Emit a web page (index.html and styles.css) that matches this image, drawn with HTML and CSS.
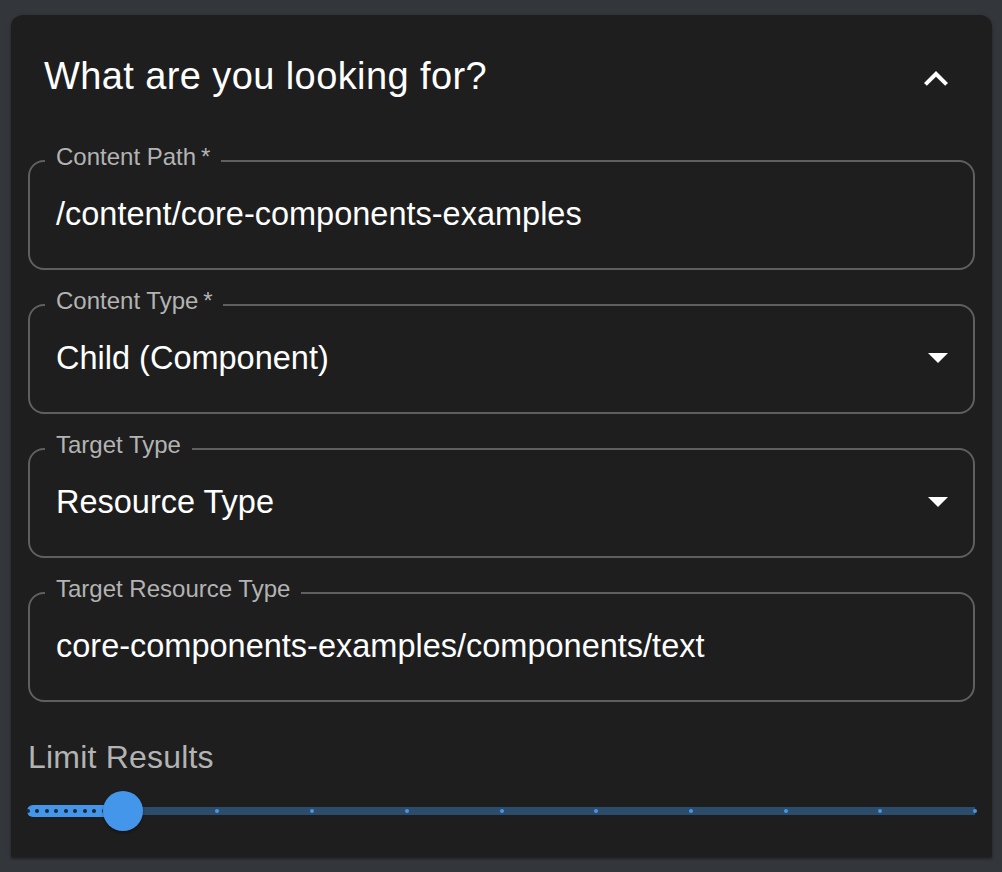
FILE: index.html
```html
<!DOCTYPE html>
<html lang="en">
<head>
<meta charset="utf-8">
<title>Search</title>
<link rel="stylesheet" href="styles.css">
</head>
<body>
<section class="card">
  <header class="card-header">
    <h2 class="title">What are you looking for?</h2>
    <button class="expand" aria-label="collapse">
      <svg viewBox="0 0 24 24" width="48" height="48"><path fill="#fff" d="M12 8l-6 6 1.41 1.41L12 10.83l4.59 4.58L18 14z"/></svg>
    </button>
  </header>
  <div class="details">
    <div class="fields">
      <div class="field">
        <span class="label">Content Path&thinsp;*</span>
        <span class="value">/content/core-components-examples</span>
      </div>
      <div class="field select">
        <span class="label">Content Type&thinsp;*</span>
        <span class="value">Child (Component)</span>
        <svg class="arrow" viewBox="7 10 10 5" width="20" height="10"><path fill="#fff" d="M7 10l5 5 5-5z"/></svg>
      </div>
      <div class="field select">
        <span class="label">Target Type</span>
        <span class="value">Resource Type</span>
        <svg class="arrow" viewBox="7 10 10 5" width="20" height="10"><path fill="#fff" d="M7 10l5 5 5-5z"/></svg>
      </div>
      <div class="field">
        <span class="label">Target Resource Type</span>
        <span class="value">core-components-examples/components/text</span>
      </div>
    </div>
    <div class="limit-label">Limit Results</div>
    <div class="slider">
      <span class="rail"></span>
      <span class="track" style="width:10%"></span>
      <span class="mark active" style="left:0%"></span>
      <span class="mark active" style="left:1%"></span>
      <span class="mark active" style="left:2%"></span>
      <span class="mark active" style="left:3%"></span>
      <span class="mark active" style="left:4%"></span>
      <span class="mark active" style="left:5%"></span>
      <span class="mark active" style="left:6%"></span>
      <span class="mark active" style="left:7%"></span>
      <span class="mark active" style="left:8%"></span>
      <span class="mark active" style="left:9%"></span>
      <span class="mark active" style="left:10%"></span>
      <span class="mark" style="left:20%"></span>
      <span class="mark" style="left:30%"></span>
      <span class="mark" style="left:40%"></span>
      <span class="mark" style="left:50%"></span>
      <span class="mark" style="left:60%"></span>
      <span class="mark" style="left:70%"></span>
      <span class="mark" style="left:80%"></span>
      <span class="mark" style="left:90%"></span>
      <span class="mark" style="left:100%"></span>
      <span class="thumb" style="left:10%"></span>
    </div>
  </div>
</section>
</body>
</html>
```
FILE: styles.css
```css
html, body {
  margin: 0;
  padding: 0;
  background: #33363b;
}
body {
  padding: 15px 10px 15px 11px;
  font-family: "Liberation Sans", Arial, Helvetica, sans-serif;
  color: #fff;
}
.card {
  width: 981px;
  height: 842px;
  box-sizing: border-box;
  background: #1e1e1e;
  border-radius: 12px 12px 0 0;
  box-shadow: 0 2px 2px rgba(0,0,0,0.25), 0 1px 4px rgba(0,0,0,0.2);
}
.card-header {
  height: 128px;
  display: flex;
  align-items: center;
  justify-content: space-between;
  padding: 0 32px 0 33px;
}
.title {
  margin: 0 0 7px 0;
  font-size: 38px;
  line-height: 38px;
  letter-spacing: 0.4px;
  font-weight: 400;
}
.expand {
  width: 48px;
  height: 48px;
  padding: 0;
  border: 0;
  background: none;
  display: block;
}
.expand svg { display: block; }
.details {
  padding: 17px 17px 0 17px;
}
.fields {
  display: flex;
  flex-direction: column;
  gap: 34px;
}
.field {
  position: relative;
  height: 110px;
  box-sizing: border-box;
  border: 2px solid #5f5f5f;
  border-radius: 16px;
  display: flex;
  align-items: center;
  padding: 0 26px 3px;
}
.label {
  position: absolute;
  left: 15px;
  top: -19px;
  padding: 0 11px;
  background: #1e1e1e;
  font-size: 24px;
  line-height: 28px;
  color: #b3b3b3;
}
.value {
  font-size: 32.5px;
  line-height: 40px;
  color: #fff;
}
.arrow {
  position: absolute;
  right: 25px;
  top: 50%;
  margin-top: -6px;
}
.limit-label {
  margin-top: 36px;
  font-size: 32px;
  line-height: 38px;
  letter-spacing: 0.2px;
  color: #b3b3b3;
}
.slider {
  position: relative;
  height: 40px;
  margin-top: 15px;
}
.rail {
  position: absolute;
  left: 0;
  right: 0;
  top: 16px;
  height: 8px;
  background: #2b4c6b;
}
.track {
  position: absolute;
  left: -1px;
  top: 14px;
  height: 12px;
  background: #4396e9;
  border-radius: 6px 0 0 6px;
}
.mark {
  position: absolute;
  top: 18px;
  width: 4px;
  height: 4px;
  margin-left: -2px;
  border-radius: 50%;
  background: #4396e9;
}
.mark.active {
  background: #1c2733;
}
.thumb {
  position: absolute;
  top: 0;
  width: 40px;
  height: 40px;
  margin-left: -20px;
  border-radius: 50%;
  background: #4396e9;
  box-shadow: 0 2px 3px rgba(0,0,0,0.3);
}
```
